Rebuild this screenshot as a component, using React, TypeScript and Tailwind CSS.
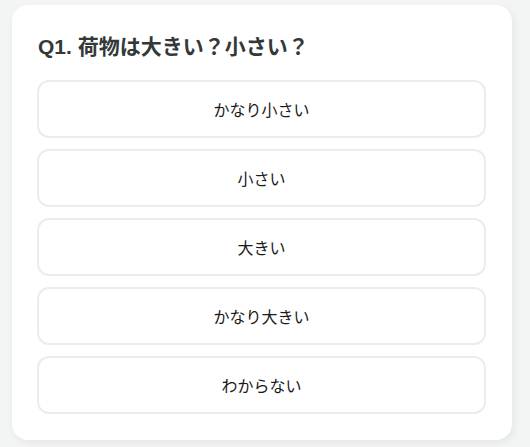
const options = ['かなり小さい', '小さい', '大きい', 'かなり大きい', 'わからない']

export default function App() {
  return (
    <div
      className="min-h-[447px] w-[530px] bg-[#f3f4f4] pt-[5px] pl-[12px]"
      style={{ fontFamily: '"Noto Sans CJK JP", "Noto Sans", sans-serif' }}
    >
      <div className="w-[500px] h-[435px] rounded-[16px] bg-white shadow-[2px_3px_8px_rgba(0,0,0,0.06)] px-[25px] pt-[25px]">
        {/* Question */}
        <h2
          className="text-[21px] leading-[34px] font-bold text-[#333838] pl-[1px]"
          style={{ fontFamily: '"Liberation Sans", "Noto Sans CJK JP", sans-serif' }}
        >
          Q1. 荷物は大きい？小さい？
        </h2>

        {/* Answers */}
        <div className="mt-[16px] flex flex-col gap-[11px] w-[449px]">
          {options.map((label) => (
            <button
              key={label}
              className="h-[58px] rounded-[12px] border-2 border-[#ececec] bg-white text-[16px] text-[#1a1a1a] flex items-center justify-center"
            >
              {label}
            </button>
          ))}
        </div>
      </div>
    </div>
  )
}
